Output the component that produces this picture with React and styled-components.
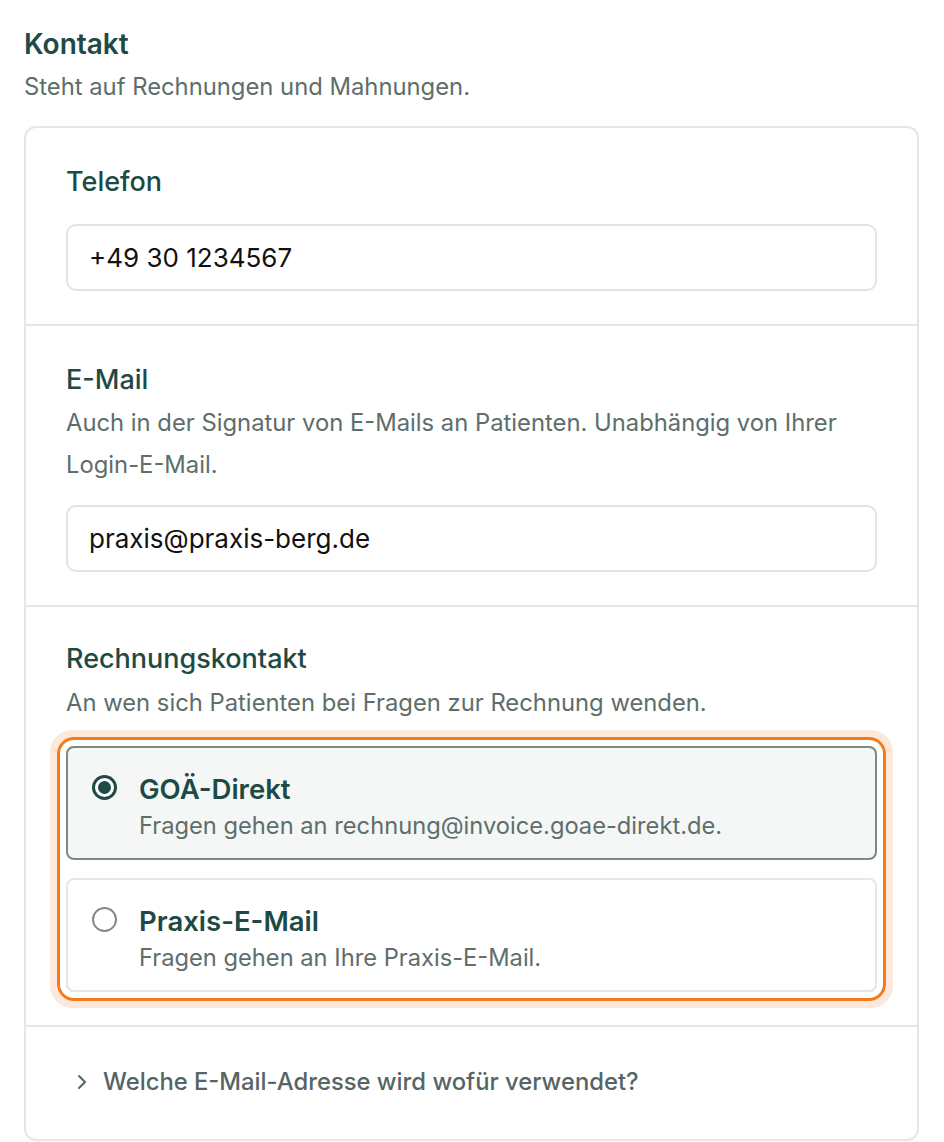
import React from 'react';
import styled, { createGlobalStyle, css } from 'styled-components';
import { ChevronRight } from 'lucide-react';

const GlobalStyle = createGlobalStyle`
    * { box-sizing: border-box; }
    body {
        margin: 0;
        background: #FFFFFF;
        font-family: Inter, "Noto Sans", sans-serif;
        -webkit-font-smoothing: antialiased;
    }
`;

const Page = styled.div`
    padding: 27px 25px 0 24px;
`;

const Heading = styled.h2`
    margin: 0;
    font-size: 28px;
    line-height: 34px;
    font-weight: 600;
    color: #1D4A44;
`;

const Lead = styled.p`
    margin: 10px 0 0;
    font-size: 23.8px;
    line-height: 32px;
    color: #5E6E6B;
`;

const Card = styled.div`
    margin-top: 23px;
    border: 2px solid #E3E8E7;
    border-radius: 12px;
    background: #FFFFFF;
`;

const Section = styled.div`
    padding: ${p => p.$top || 38}px 40px 33px;
    border-top: 2px solid #E3E8E7;

    &:first-child {
        border-top: none;
    }
`;

const Label = styled.div`
    font-size: 27px;
    line-height: 32px;
    font-weight: 500;
    color: #1D4A44;
    margin-bottom: ${p => p.$gap || 6}px;
`;

const Help = styled.p`
    margin: 0 0 ${p => p.$gap || 19}px;
    font-size: 23.8px;
    line-height: 42px;
    color: #5E6E6B;
`;

const Input = styled.input`
    display: block;
    width: 100%;
    height: 67px;
    padding: 0 21px;
    border: 2px solid #E0E5E4;
    border-radius: 10px;
    font-family: Inter, "Noto Sans", sans-serif;
    font-size: 26px;
    color: #111111;
    background: #FFFFFF;
    outline: none;
`;

const Options = styled.div`
    display: flex;
    flex-direction: column;
    gap: 18px;
    border-radius: 8px;
    box-shadow: 0 0 0 6px #FFFFFF, 0 0 0 9px #F47A20, 0 0 0 16px #FDE8DB;
`;

const Option = styled.label`
    display: flex;
    align-items: flex-start;
    gap: 22px;
    padding: 24px 24px 16px;
    border-radius: 8px;
    cursor: pointer;
    border: 2px solid #E3E8E7;
    background: #FFFFFF;

    ${p => p.$active && css`
        border-color: #7C8A87;
        background: #F4F7F6;
    `}
`;

const Radio = styled.span`
    flex: none;
    margin-top: 3px;
    width: 25px;
    height: 25px;
    border-radius: 50%;
    border: 2px solid #7F8B89;
    background: #FFFFFF;
    display: flex;
    align-items: center;
    justify-content: center;

    ${p => p.$checked && css`
        border: 3px solid #1F4A45;
        &::after {
            content: '';
            width: 13px;
            height: 13px;
            border-radius: 50%;
            background: #1F4A45;
        }
    `}
`;

const OptionText = styled.div`
    display: flex;
    flex-direction: column;
    gap: 4px;
`;

const OptionTitle = styled.span`
    font-size: 27.5px;
    line-height: 34px;
    font-weight: 600;
    color: #1D4A44;
`;

const OptionHint = styled.span`
    font-size: 23.7px;
    line-height: 32px;
    color: #5E6E6B;
`;

const Disclosure = styled.div`
    display: flex;
    align-items: center;
    gap: 9px;
    padding: 39px 44px 41px;
    border-top: 2px solid #E3E8E7;
    font-size: 23.8px;
    line-height: 32px;
    font-weight: 500;
    color: #556563;
`;

const options = [
    { id: 'goae', title: 'GOÄ-Direkt', hint: 'Fragen gehen an rechnung@invoice.goae-direkt.de.' },
    { id: 'praxis', title: 'Praxis-E-Mail', hint: 'Fragen gehen an Ihre Praxis-E-Mail.' },
];

function App() {
    const [contact, setContact] = React.useState('goae');

    return (
        <Page>
            <GlobalStyle />
            <Heading>Kontakt</Heading>
            <Lead>Steht auf Rechnungen und Mahnungen.</Lead>
            <Card>
                <Section>
                    <Label $gap={26}>Telefon</Label>
                    <Input defaultValue="+49 30 1234567" />
                </Section>
                <Section>
                    <Label>E-Mail</Label>
                    <Help>Auch in der Signatur von E-Mails an Patienten. Unabhängig von Ihrer Login-E-Mail.</Help>
                    <Input defaultValue="praxis@praxis-berg.de" />
                </Section>
                <Section $top={36}>
                    <Label $gap={7}>Rechnungskontakt</Label>
                    <Help $gap={22}>An wen sich Patienten bei Fragen zur Rechnung wenden.</Help>
                    <Options>
                        {options.map(o => (
                            <Option key={o.id} $active={contact === o.id} onClick={() => setContact(o.id)}>
                                <Radio $checked={contact === o.id} />
                                <OptionText>
                                    <OptionTitle>{o.title}</OptionTitle>
                                    <OptionHint>{o.hint}</OptionHint>
                                </OptionText>
                            </Option>
                        ))}
                    </Options>
                </Section>
                <Disclosure>
                    <ChevronRight size={24} strokeWidth={2} />
                    Welche E-Mail-Adresse wird wofür verwendet?
                </Disclosure>
            </Card>
        </Page>
    );
}

export default App;
